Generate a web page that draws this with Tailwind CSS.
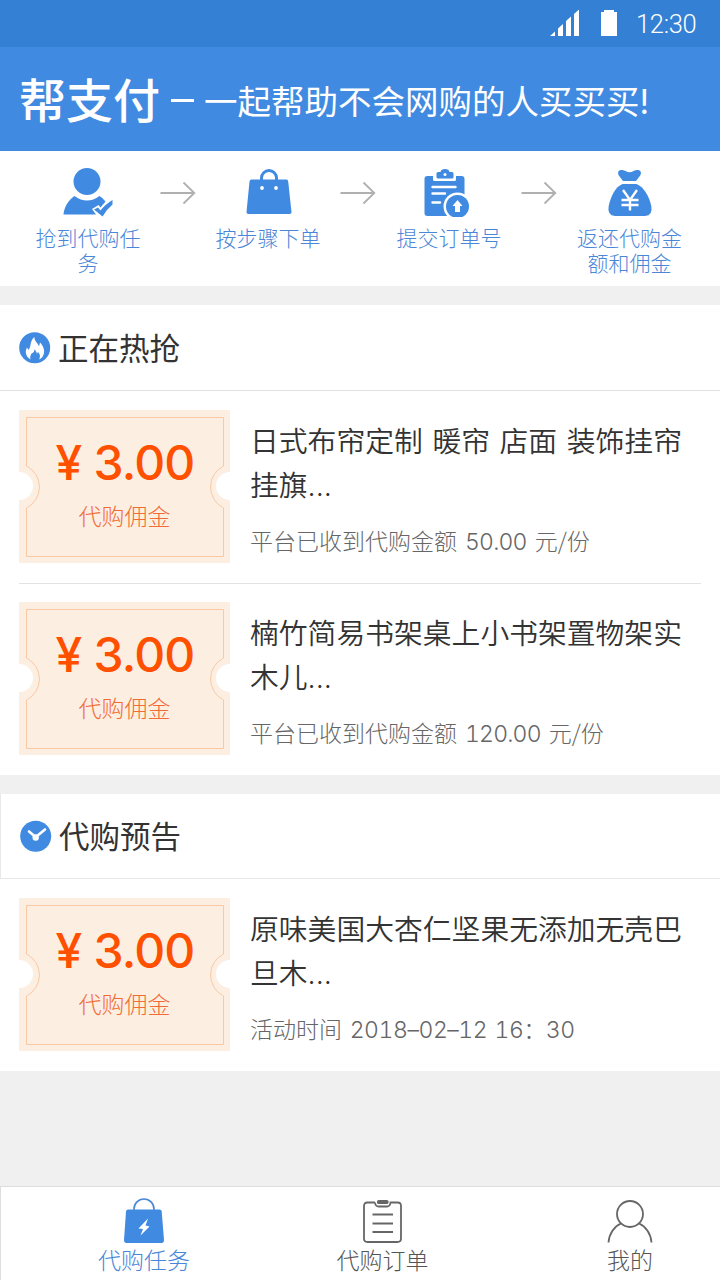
<!DOCTYPE html>
<html lang="zh-CN">
<head>
    <meta charset="UTF-8">
    <meta name="viewport" content="width=720">
    <title>帮支付</title>
    <script src="https://cdn.jsdelivr.net/npm/@tailwindcss/browser@4"></script>
</head>
<body class="w-[720px] h-[1280px] flex flex-col overflow-hidden bg-[#f0f0f0] text-[#333] font-['Inter','Noto_Sans_CJK_SC',sans-serif]">

<!-- shared shapes -->
<svg class="hidden">
    <symbol id="arrow" viewBox="0 0 36 24">
        <path d="M0.5 12H34M23.5 1.5L34.3 12L23.5 22.5" fill="none" stroke="#b0b0b0" stroke-width="1.8"/>
    </symbol>
    <symbol id="ticket" viewBox="0 0 211 153">
        <path d="M0 0H211V62A14 14 0 0 0 211 90V153H0V90A14 14 0 0 0 0 62Z" fill="#fcefe2"/>
        <path d="M7.5 7.5H204.5V56A23.5 23.5 0 0 0 204.5 98V146.500H7.5V98A23.5 23.5 0 0 0 7.5 56Z" fill="none" stroke="#f9c8a4" stroke-width="1"/>
    </symbol>
</svg>

<!-- status bar -->
<div class="h-[47px] shrink-0 bg-[#3480d4] flex items-center justify-end pr-6 text-white">
    <svg class="w-[30px] h-[28px]" viewBox="0 0 30 28" fill="#fff">
        <path d="M0 26L5 21.500V26ZM8 26V18.500L13 14V26ZM16 26V11L21 6.500V26ZM24 26V4L29 -0.500V26Z"/>
    </svg>
    <svg class="w-4 h-[28px] ml-[21px]" viewBox="0 0 16 28" fill="#fff">
        <path d="M0 2H3V0H13V2H16V26H0Z"/>
    </svg>
    <span class="ml-[19px] w-[60px] mt-0.5 font-['Roboto'] font-light text-[25.500px] leading-none tracking-[-0.3px]">12:30</span>
</div>

<!-- header -->
<header class="h-[104px] shrink-0 bg-[#408ae1] flex items-center pl-[19px] text-white whitespace-nowrap">
    <span class="mt-0.5 text-[47px] leading-none font-medium">帮支付</span>
    <span class="w-[23px] h-[3px] bg-white mt-[2px] ml-[11px] mr-[10px]"></span>
    <span class="mt-[7px] text-[33.500px] leading-none">一起帮助不会网购的人买买买!</span>
</header>

<!-- steps -->
<section class="h-[135px] shrink-0 bg-white flex pl-[34px] pt-4 text-[21px] leading-[25px] font-light text-[#4a86d8] text-center">
    <div class="w-[108px] flex flex-col items-center">
        <svg class="w-[50px] h-[50px] mb-[9px]" viewBox="0 0 50 50" fill="#408ae1">
            <circle cx="24" cy="14.500" r="13.500"/>
            <path d="M0.500 47.500C1 41 5 33 11.500 29Q24 38 36.500 29Q40 31 42.500 34.500L37.500 40.500L35.500 38L29 42L33 47.500Z"/>
            <path d="M31 42.500L35 40.500L37.500 43.500Q42 37.500 49.500 33V37.500Q44 42 39.500 49.500Z"/>
        </svg>
        <span>抢到代购任务</span>
    </div>
    <svg class="w-9 h-6 mt-[14px] ml-[18px]"><use href="#arrow"/></svg>
    <div class="w-[144px] flex flex-col items-center">
        <svg class="w-[46px] h-[50px] mb-[9px] ml-px" viewBox="0 0 46 50">
            <path d="M5.500 12.500H40.500Q42 12.500 42.200 14.500L45.500 45Q45.600 47 43.500 47H2.500Q0.400 47 0.500 45L3.500 14.500Q3.700 12.500 5.500 12.500Z" fill="#408ae1"/>
            <path d="M15.500 14V11A7.500 7.500 0 0 1 30.500 11V14" fill="none" stroke="#408ae1" stroke-width="3"/>
            <circle cx="16" cy="21" r="1.900" fill="#fff"/>
            <circle cx="30" cy="21" r="1.900" fill="#fff"/>
        </svg>
        <span>按步骤下单</span>
    </div>
    <svg class="w-9 h-6 mt-[14px]"><use href="#arrow"/></svg>
    <div class="w-[145px] flex flex-col items-center">
        <svg class="w-[46px] h-[50px] mb-[9px] mr-[3px]" viewBox="0 0 46 50">
            <rect x="0.500" y="9" width="40" height="40" rx="3" fill="#408ae1"/>
            <path d="M10.500 7.500V12.500H30.500V7.500Z" fill="#fff" stroke="#fff" stroke-width="3" stroke-linejoin="round"/>
            <path d="M14 5H16.500Q17 2 21 2T25.500 5H28Q29.500 5 29.500 6.500V10Q29.500 11.500 28 11.500H14Q12.500 11.500 12.500 10V6.500Q12.500 5 14 5Z" fill="#408ae1"/>
            <circle cx="21" cy="7.500" r="1.500" fill="#fff"/>
            <path d="M8.500 20H31.500M8.500 26.500H21M8.500 35.500H16" stroke="#fff" stroke-width="2.400" stroke-linecap="round"/>
            <circle cx="33.500" cy="39.500" r="14" fill="#fff"/>
            <circle cx="33.500" cy="39.500" r="11.500" fill="#408ae1"/>
            <path d="M33.500 33L38.500 39H36V45H31V39H28.500Z" fill="#fff"/>
        </svg>
        <span class="pl-px">提交订单号</span>
    </div>
    <svg class="w-9 h-6 mt-[14px] mr-[18px]"><use href="#arrow"/></svg>
    <div class="w-[109px] flex flex-col items-center">
        <svg class="w-[46px] h-[50px] mb-[9px]" viewBox="0 0 46 50">
            <path d="M16 14L11.500 8Q10 4 13.500 3Q16 2.500 18.500 4Q22.500 6.500 26.500 4Q29 2.500 31.500 3Q35 4 33.500 8L29 14Z" fill="#408ae1"/>
            <path d="M15.500 17H29.500C37 20 42 29 44.300 39Q46 48.500 38 49H8Q0 48.500 1.700 39C4 29 8 20 15.500 17Z" fill="#408ae1"/>
            <path d="M16 23L23 33L30 23M23 32V43.500M14.500 33H31.500M14.500 38H31.500" fill="none" stroke="#fff" stroke-width="2.400"/>
        </svg>
        <span>返还代购金额和佣金</span>
    </div>
</section>

<!-- hot tasks -->
<section class="mt-[19px] shrink-0 bg-white">
    <div class="h-[86px] flex items-center pl-[19px] gap-[7px] border-b border-[#e2e2e2]">
        <svg class="w-[32px] h-[32px]" viewBox="0 0 32 32">
            <circle cx="15.700" cy="15.700" r="15.500" fill="#408ae1"/>
            <path d="M11.500 27.500C6 24 6 19 8 15.500L9.500 18C12.500 14.500 10.500 9 15.500 5C15 9 19 11 20 14.500L21 10.500C24.500 14 25.500 18 25 21Q24 26 20 27.500C22 24 20.500 21.500 18.800 20L18 22C17.500 20 17 18.500 15 17.500C16 21 13 20.500 12 22.500Q10.500 25 11.500 27.500Z" fill="#fff"/>
        </svg>
        <h2 class="mt-[3px] text-[30.500px] leading-none">正在热抢</h2>
    </div>
    <div class="mx-[19px] h-[193px] flex items-start pt-[19px] border-b border-[#e2e2e2]">
        <div class="relative w-[211px] h-[153px] shrink-0 flex flex-col items-center">
            <svg class="absolute inset-0 w-[211px] h-[153px]"><use href="#ticket"/></svg>
            <div class="relative mt-[28px] text-[48px] leading-[50px] tracking-[-0.8px] font-[450] text-[#ff5000] flex gap-[12px] pl-px"><span>¥</span><span>3.00</span></div>
            <div class="relative mt-[16px] text-[23px] leading-[26px] font-light text-[#f26a35]">代购佣金</div>
        </div>
        <div class="ml-5 w-[440px]">
            <h3 class="mt-[10px] text-[28.800px] leading-[44px] font-[350] [word-spacing:1.5px]">日式布帘定制 暖帘 店面 装饰挂帘<br>挂旗...</h3>
            <p class="mt-[15px] text-[23px] leading-[34px] font-light text-[#666] whitespace-nowrap [word-spacing:1.5px]">平台已收到代购金额 <span class="tabular-nums font-[350] tracking-[-0.8px]">50.00</span> <span class="font-['Noto_Sans_CJK_SC']">元/份</span></p>
        </div>
    </div>
    <div class="mx-[19px] h-[191px] flex items-start pt-[18px]">
        <div class="relative w-[211px] h-[153px] shrink-0 flex flex-col items-center">
            <svg class="absolute inset-0 w-[211px] h-[153px]"><use href="#ticket"/></svg>
            <div class="relative mt-[28px] text-[48px] leading-[50px] tracking-[-0.8px] font-[450] text-[#ff5000] flex gap-[12px] pl-px"><span>¥</span><span>3.00</span></div>
            <div class="relative mt-[16px] text-[23px] leading-[26px] font-light text-[#f26a35]">代购佣金</div>
        </div>
        <div class="ml-5 w-[440px]">
            <h3 class="mt-[10px] text-[28.800px] leading-[44px] font-[350]">楠竹简易书架桌上小书架置物架实<br>木儿...</h3>
            <p class="mt-[15px] text-[23px] leading-[34px] font-light text-[#666] whitespace-nowrap [word-spacing:1.5px]">平台已收到代购金额 <span class="tabular-nums font-[350] tracking-[-0.8px]">120.00</span> <span class="font-['Noto_Sans_CJK_SC']">元/份</span></p>
        </div>
    </div>
</section>

<!-- upcoming tasks -->
<section class="mt-[19px] shrink-0 bg-white">
    <div class="h-[85px] flex items-center pl-[19px] gap-[7px] border-b border-l border-[#e8e8e8]">
        <svg class="w-[32px] h-[32px]" viewBox="0 0 32 32">
            <circle cx="15.700" cy="16.200" r="15.500" fill="#408ae1"/>
            <path d="M9 11.500L15.700 17L25 9.500" fill="none" stroke="#fff" stroke-width="2.600" stroke-linecap="round"/>
            <circle cx="15.700" cy="17.500" r="3.200" fill="#fff"/>
        </svg>
        <h2 class="mt-[2px] text-[30.500px] leading-none">代购预告</h2>
    </div>
    <div class="mx-[19px] h-[192px] flex items-start pt-[19px]">
        <div class="relative w-[211px] h-[153px] shrink-0 flex flex-col items-center">
            <svg class="absolute inset-0 w-[211px] h-[153px]"><use href="#ticket"/></svg>
            <div class="relative mt-[28px] text-[48px] leading-[50px] tracking-[-0.8px] font-[450] text-[#ff5000] flex gap-[12px] pl-px"><span>¥</span><span>3.00</span></div>
            <div class="relative mt-[16px] text-[23px] leading-[26px] font-light text-[#f26a35]">代购佣金</div>
        </div>
        <div class="ml-5 w-[440px]">
            <h3 class="mt-[10px] text-[28.800px] leading-[44px] font-[350]">原味美国大杏仁坚果无添加无壳巴<br>旦木...</h3>
            <p class="mt-[17px] text-[23px] leading-[34px] font-light text-[#666] whitespace-nowrap [word-spacing:1.5px] tabular-nums">活动时间 <span class="tracking-[-0.45px]">2018–02–12 16：30</span></p>
        </div>
    </div>
</section>

<!-- tab bar -->
<nav class="mt-auto h-[94px] shrink-0 bg-white border-t border-l border-[#dedede] flex pt-[10px] text-[23px] leading-[28px] font-light text-[#555]">
    <a class="w-[286px] flex flex-col items-center text-[#4a86d8]">
        <svg class="w-[42px] h-[50px]" viewBox="0 0 42 50">
            <path d="M5 12.500H36.500Q38.500 12.500 38.700 14.500L41 43Q41 46 38.500 46H3.500Q1 46 1 43L3 14.500Q3.200 12.500 5 12.500Z" fill="#408ae1"/>
            <path d="M11 13V12A10 10 0 0 1 31 12V13" fill="none" stroke="#4a86d8" stroke-width="1.600"/>
            <path d="M25 21.500L15.500 31.500L20 32L17.500 38.500L26.500 29.500L22.500 28.500Z" fill="#fff"/>
        </svg>
        <span>代购任务</span>
    </a>
    <a class="w-[191px] flex flex-col items-center">
        <svg class="w-[40px] h-[50px]" viewBox="0 0 40 50" fill="none" stroke="#666" stroke-width="1.800">
            <path d="M12 5.500H4.500Q1 5.500 1 9V41.500Q1 45 4.500 45H34.500Q38 45 38 41.500V9Q38 5.500 34.500 5.500H27.500Q27 9.500 24 9.500H15.500Q12.500 9.500 12 5.500"/>
            <rect x="14" y="3" width="11.500" height="4" rx="1.600" fill="#666" stroke="none"/>
            <path d="M9.500 17.500H30M9.500 26.500H30M9.500 35H30"/>
        </svg>
        <span>代购订单</span>
    </a>
    <a class="w-[242px] pl-[62px] flex flex-col items-center">
        <svg class="w-[46px] h-[50px]" viewBox="0 0 46 50" fill="none" stroke="#666" stroke-width="1.800">
            <circle cx="23" cy="17" r="13"/>
            <path d="M1.500 45.500C2 37 7 29.500 14 26.500M44.500 45.500C44 37 39 29.500 32 26.500"/>
        </svg>
        <span>我的</span>
    </a>
</nav>
</body>
</html>
